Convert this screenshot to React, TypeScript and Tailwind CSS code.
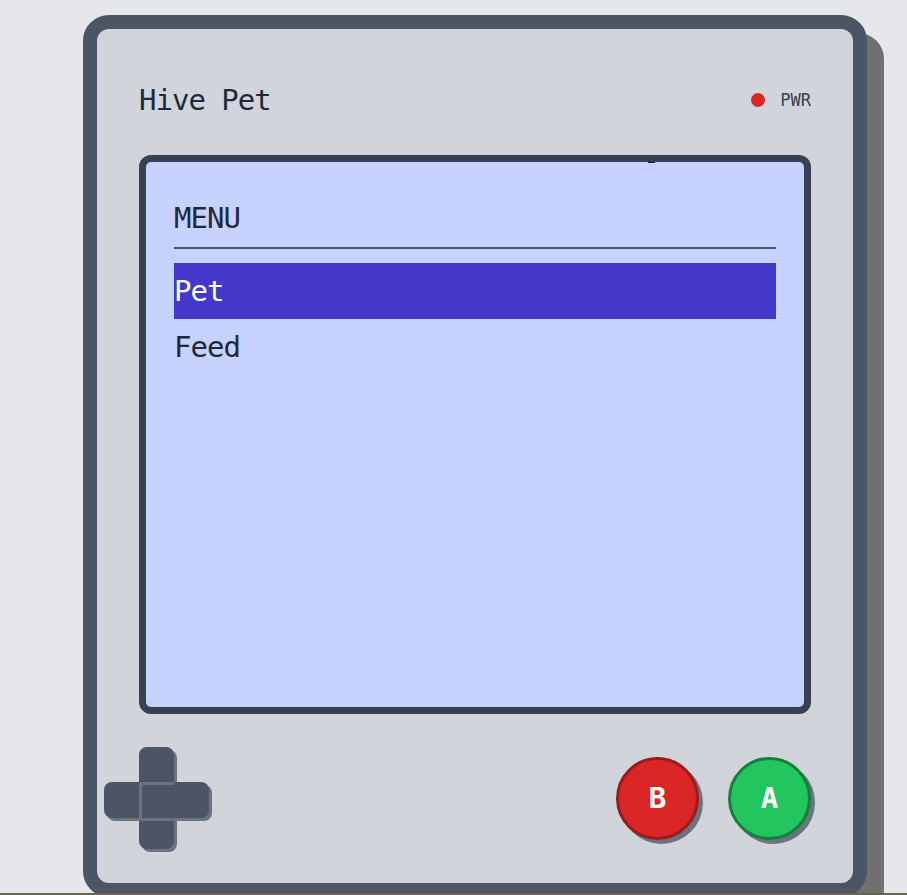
import React from 'react';

const mono = { fontFamily: '"DejaVu Sans Mono", "Liberation Mono", monospace' };

const menuItems = ['Pet', 'Feed'];

function DPad() {
  return (
    <svg width="112" height="108" viewBox="0 0 112 108" className="-ml-[35px] mt-[6px]">
      <rect x="38" y="3" width="35" height="102" rx="8" fill="#6b7280" />
      <rect x="35" y="0" width="35" height="102" rx="8" fill="#4b5563" />
      <rect x="3" y="38" width="105" height="36" rx="8" fill="#6b7280" />
      <rect x="0" y="35" width="105" height="36" rx="8" fill="#4b5563" />
      <rect x="35" y="35" width="35" height="3" fill="#6b7280" />
      <rect x="35" y="35" width="3" height="36" fill="#6b7280" />
    </svg>
  );
}

function RoundButton({ label, tone }: { label: string; tone: 'red' | 'green' }) {
  const colors = tone === 'red' ? 'bg-[#dc2626] border-[#991b1b]' : 'bg-[#22c55e] border-[#15803d]';
  return (
    <div
      className={`w-[83px] h-[83px] rounded-full border-[3px] ${colors} shadow-[4px_4px_0_0_#6b7280] flex items-center justify-center text-white text-[29px] leading-none font-bold`}
      style={mono}
    >
      {label}
    </div>
  );
}

export default function App() {
  return (
    <div className="w-[907px] bg-[#e5e7eb]">
      <div className="h-[893px] overflow-hidden pt-[15px] pl-[83px]">
        <div className="w-[784px] h-[882px] rounded-[26px] border-[14px] border-[#4b5563] bg-[#d1d5db] shadow-[17px_18px_0_0_#707070] px-[28px] flex flex-col">
          <div className="mt-[43px] h-14 mx-[14px] flex items-center justify-between">
            <span className="text-[29px] leading-none tracking-[-1px] text-[#1f2937]" style={mono}>
              Hive Pet
            </span>
            <div className="flex items-center gap-[15px]">
              <span className="w-[14px] h-[14px] rounded-full bg-[#dc2626]" />
              <span className="text-[17px] leading-none text-[#374151]" style={mono}>
                PWR
              </span>
            </div>
          </div>

          <div className="relative mt-[27px] mx-[14px] h-[559px] rounded-[12px] border-[7px] border-[#374151] bg-[#c7d2fe] px-[28px] pt-[42px]">
            <span className="absolute top-0 left-[502px] w-[7px] h-px bg-[#111827]" />
            <div
              className="text-[29px] leading-[29px] tracking-[-1px] text-[#1f2937] pb-[14px] border-b-2 border-[#4b5563]"
              style={mono}
            >
              MENU
            </div>
            <div className="mt-[14px] flex flex-col">
              {menuItems.map((item, i) => (
                <div
                  key={item}
                  className={`h-14 flex items-center text-[29px] leading-none tracking-[-1px] ${
                    i === 0 ? 'bg-[#4338ca] text-white' : 'text-[#1f2937]'
                  }`}
                  style={mono}
                >
                  {item}
                </div>
              ))}
            </div>
          </div>

          <div className="mt-[31px] mx-[14px] h-[106px] flex items-center justify-between">
            <DPad />
            <div className="flex items-center gap-[29px]">
              <RoundButton label="B" tone="red" />
              <RoundButton label="A" tone="green" />
            </div>
          </div>
        </div>
      </div>
      <div className="h-[2px] bg-[#6b6454]" />
    </div>
  );
}
